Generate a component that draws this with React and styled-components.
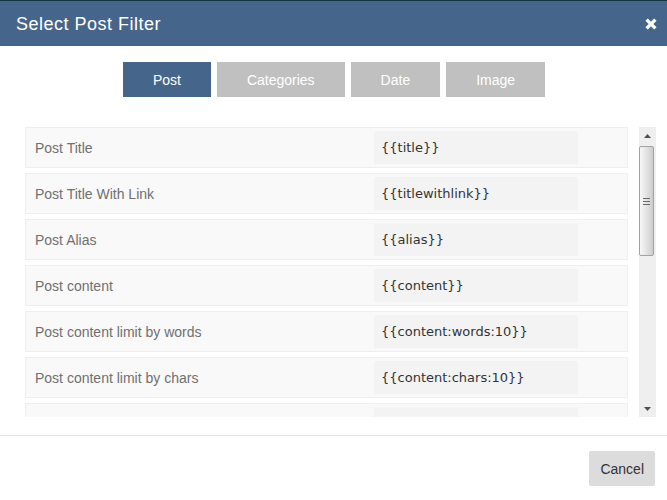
import React, { useState } from 'react';
import styled, { createGlobalStyle } from 'styled-components';

const GlobalStyle = createGlobalStyle`
  html, body {
    margin: 0;
    padding: 0;
    background: #0f3842;
  }
  body {
    font-family: Arial, "Liberation Sans", sans-serif;
  }
`;

const Modal = styled.div`
  margin-top: 1px;
  background: #fff;
  min-height: 499px;
  display: flex;
  flex-direction: column;
`;

const Header = styled.div`
  height: 45px;
  background: #45668a;
  display: flex;
  align-items: center;
  justify-content: space-between;
  padding: 0 10px 0 16px;
`;

const Title = styled.h3`
  margin: 2px 0 0;
  color: #fff;
  font-size: 18px;
  font-weight: normal;
  letter-spacing: 0.5px;
`;

const CloseButton = styled.button`
  border: none;
  background: none;
  padding: 0;
  margin-top: 1px;
  display: flex;
  cursor: pointer;
`;

const Tabs = styled.div`
  display: flex;
  justify-content: center;
  gap: 6px;
  margin-top: 16px;
  padding-left: 1px;
`;

const Tab = styled.button`
  border: none;
  height: 35px;
  padding: 0 30px;
  font-family: Arial, "Liberation Sans", sans-serif;
  font-size: 14px;
  color: #fff;
  background: ${({ $active }) => ($active ? '#45668a' : '#c0c0c0')};
  cursor: pointer;
`;

const ListArea = styled.div`
  margin: 30px 11px 0 25px;
  height: 290px;
  display: flex;
`;

const Viewport = styled.div`
  flex: 1;
  overflow: hidden;
  padding-right: 11px;
  display: flex;
  flex-direction: column;
  gap: 5px;
`;

const FilterRow = styled.div`
  flex-shrink: 0;
  display: grid;
  grid-template-columns: 345px 204px;
  align-items: center;
  padding: 3px;
  background: #f9f9f9;
  border: 1px solid #efefef;
`;

const Label = styled.span`
  padding-left: 6px;
  font-size: 14px;
  color: #707070;
`;

const Shortcode = styled.div`
  height: 33px;
  display: flex;
  align-items: center;
  padding-left: 7px;
  background: #f3f3f3;
  border-radius: 2px;
  font-family: "DejaVu Sans", Verdana, sans-serif;
  font-size: 13px;
  color: #333;
`;

const Scrollbar = styled.div`
  width: 17px;
  flex-shrink: 0;
  background: #efefef;
  display: flex;
  flex-direction: column;
`;

const ScrollArrow = styled.div`
  height: 17px;
  display: flex;
  align-items: center;
  justify-content: center;
`;

const ScrollTrack = styled.div`
  flex: 1;
  padding-top: 2px;
`;

const ScrollThumb = styled.div`
  width: 15px;
  height: 110px;
  box-sizing: border-box;
  border: 1px solid #a2a2a2;
  border-radius: 2px;
  background-image:
    linear-gradient(#6a6a6a, #6a6a6a),
    linear-gradient(#6a6a6a, #6a6a6a),
    linear-gradient(#6a6a6a, #6a6a6a),
    linear-gradient(to right, #f7f7f7, #e3e3e3 50%, #cccccc);
  background-repeat: no-repeat;
  background-size: 7px 1px, 7px 1px, 7px 1px, 100% 100%;
  background-position: 3px calc(50% - 3px), 3px 50%, 3px calc(50% + 3px), 0 0;
`;

const Footer = styled.div`
  margin-top: 18px;
  border-top: 1px solid #e5e5e5;
  display: flex;
  justify-content: flex-end;
  padding: 15px 12px;
`;

const CancelButton = styled.button`
  border: none;
  height: 35px;
  padding: 0 11px;
  border-radius: 2px;
  background: #dcdcdc;
  color: #333;
  font-family: Arial, "Liberation Sans", sans-serif;
  font-size: 14px;
  cursor: pointer;
`;

const CloseIcon = () => (
  <svg width="12" height="12" viewBox="0 0 12 12">
    <path d="M1.6 1.6 L10.4 10.4 M10.4 1.6 L1.6 10.4" stroke="#fff" strokeWidth="3.4" />
  </svg>
);

const Triangle = ({ down }) => (
  <svg width="7" height="4" viewBox="0 0 7 4">
    <path d={down ? 'M0 0 L3.5 4 L7 0 Z' : 'M0 4 L3.5 0 L7 4 Z'} fill="#505050" />
  </svg>
);

const tabs = ['Post', 'Categories', 'Date', 'Image'];

const postFilters = [
  { label: 'Post Title', code: '{{title}}' },
  { label: 'Post Title With Link', code: '{{titlewithlink}}' },
  { label: 'Post Alias', code: '{{alias}}' },
  { label: 'Post content', code: '{{content}}' },
  { label: 'Post content limit by words', code: '{{content:words:10}}' },
  { label: 'Post content limit by chars', code: '{{content:chars:10}}' },
  { label: 'Post excerpt', code: '{{excerpt}}' },
  { label: 'Post excerpt limit by words', code: '{{excerpt:words:10}}' },
  { label: 'Post Link', code: '{{link}}' },
  { label: 'Post ID', code: '{{id}}' },
  { label: 'Post Author', code: '{{author}}' },
  { label: 'Post Date', code: '{{date}}' },
  { label: 'Post Modified Date', code: '{{modified}}' },
  { label: 'Number of Comments', code: '{{numcomments}}' },
  { label: 'Post Meta', code: '{{meta:key}}' },
];

const App = () => {
  const [activeTab, setActiveTab] = useState('Post');

  return (
    <>
      <GlobalStyle />
      <Modal>
        <Header>
          <Title>Select Post Filter</Title>
          <CloseButton aria-label="Close">
            <CloseIcon />
          </CloseButton>
        </Header>
        <Tabs>
          {tabs.map((tab) => (
            <Tab key={tab} $active={tab === activeTab} onClick={() => setActiveTab(tab)}>
              {tab}
            </Tab>
          ))}
        </Tabs>
        <ListArea>
          <Viewport>
            {postFilters.map((filter) => (
              <FilterRow key={filter.code}>
                <Label>{filter.label}</Label>
                <Shortcode>{filter.code}</Shortcode>
              </FilterRow>
            ))}
          </Viewport>
          <Scrollbar>
            <ScrollArrow>
              <Triangle />
            </ScrollArrow>
            <ScrollTrack>
              <ScrollThumb />
            </ScrollTrack>
            <ScrollArrow>
              <Triangle down />
            </ScrollArrow>
          </Scrollbar>
        </ListArea>
        <Footer>
          <CancelButton>Cancel</CancelButton>
        </Footer>
      </Modal>
    </>
  );
};

export default App;
